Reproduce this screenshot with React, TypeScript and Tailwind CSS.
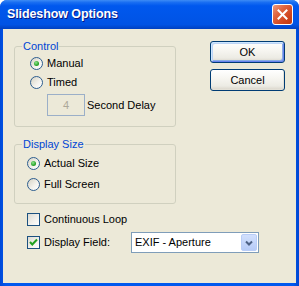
import React from "react";

function Radio({ checked, label }: { checked?: boolean; label: string }) {
  return (
    <div className="flex items-center h-[13px]">
      <span className="w-[13px] h-[13px] shrink-0 rounded-full border border-[#2C5D8F] bg-[linear-gradient(135deg,#D6D3C4_0%,#F4F3EE_60%,#FFFFFF_100%)] flex items-center justify-center">
        {checked && (
          <span className="w-[5px] h-[5px] rounded-full bg-[radial-gradient(circle_at_40%_35%,#8EE58E_0%,#2AA42A_60%,#1A8A1A_100%)]" />
        )}
      </span>
      <span className="ml-[4px] leading-[13px]">{label}</span>
    </div>
  );
}

function Check({ checked }: { checked?: boolean }) {
  return (
    <span className="w-[13px] h-[13px] shrink-0 border border-[#1C5180] bg-[linear-gradient(135deg,#DCDAD2_0%,#F2F1EC_55%,#FFFFFF_100%)] flex items-center justify-center">
      {checked && (
        <svg width="9" height="9" viewBox="0 0 9 9">
          <path d="M1 4 L3.3 6.5 L8 1.5" fill="none" stroke="#21A121" strokeWidth="2" />
        </svg>
      )}
    </span>
  );
}

function XPButton({ label, def }: { label: string; def?: boolean }) {
  return (
    <div
      className={
        "w-[75px] h-[22px] rounded-[3px] border border-[#003C74] bg-[linear-gradient(to_bottom,#FFFFFF_0%,#F6F5F0_45%,#ECEBE4_80%,#D8D3C8_100%)] flex items-center justify-center leading-[13px] " +
        (def
          ? "shadow-[inset_1px_1px_0_#CEE7FF,inset_-1px_-1px_0_#6982EE,inset_2px_2px_0_#BCD4F6,inset_-2px_-2px_0_#89ADE4]"
          : "shadow-[inset_-1px_-1px_0_#E3E0D6]")
      }
    >
      {label}
    </div>
  );
}

export default function App() {
  return (
    <div
      className="w-[299px] h-[286px] bg-white text-[11px] text-black"
      style={{ fontFamily: '"Liberation Sans", Arial, sans-serif' }}
    >
      <div className="w-full h-full flex flex-col rounded-t-[7px] bg-[linear-gradient(to_right,#0049D8_0%,#0058EE_2%,#0058EE_98%,#0046D0_100%)] overflow-hidden">
        <div className="h-[29px] shrink-0 flex items-center justify-between bg-[linear-gradient(to_bottom,#3D8CF5_0%,#1A6FF2_8%,#0058EE_20%,#0055E8_60%,#0053E4_85%,#0040C0_100%)]">
          <span
            className="ml-[7px] text-white font-bold text-[12.5px] tracking-[-0.1px] [text-shadow:1px_1px_0_#0A1883]"
            style={{ fontFamily: '"Liberation Sans", Arial, sans-serif' }}
          >
            Slideshow Options
          </span>
          <div className="mr-[6px] w-[21px] h-[21px] rounded-[3px] border border-white bg-[linear-gradient(135deg,#EE9A7E_0%,#E0643F_35%,#D0451F_70%,#C0380F_100%)] flex items-center justify-center">
            <svg width="11" height="11" viewBox="0 0 11 11">
              <path d="M1.5 1.5 L9.5 9.5 M9.5 1.5 L1.5 9.5" stroke="white" strokeWidth="2" strokeLinecap="square" />
            </svg>
          </div>
        </div>
        <div className="flex-1 mx-[3px] mb-[3px] bg-[#ECE9D8] flex flex-col pt-[11px]">
          <div className="flex">
            <div className="w-[173px] pl-[11px] flex flex-col gap-[11px]">
              <fieldset className="m-0 p-0 min-w-0 border border-[#D0D0BF] rounded-[3px]">
                <legend className="ml-[7px] px-[1px] leading-[13px] text-[#0046D5]">Control</legend>
                <div className="pt-[4px] pl-[15px] pb-[10px] flex flex-col">
                  <Radio checked label="Manual" />
                  <div className="mt-[6px]">
                    <Radio label="Timed" />
                  </div>
                  <div className="mt-[5px] ml-[17px] flex items-center">
                    <div className="w-[38px] h-[22px] border border-[#9BAFC8] flex items-center justify-center text-[#ACA899]">
                      4
                    </div>
                    <span className="ml-[2px]">Second Delay</span>
                  </div>
                </div>
              </fieldset>
              <fieldset className="m-0 p-0 min-w-0 border border-[#D0D0BF] rounded-[3px]">
                <legend className="ml-[7px] px-[1px] leading-[13px] text-[#0046D5]">Display Size</legend>
                <div className="pt-[6px] pl-[12px] pb-[12px] flex flex-col gap-[8px]">
                  <Radio checked label="Actual Size" />
                  <Radio label="Full Screen" />
                </div>
              </fieldset>
            </div>
            <div className="pl-[34px] pt-[1px] flex flex-col gap-[6px]">
              <XPButton label="OK" def />
              <XPButton label="Cancel" />
            </div>
          </div>
          <div className="mt-[9px] pl-[24px] flex flex-col gap-[6px]">
            <div className="flex items-center h-[13px]">
              <Check />
              <span className="ml-[4px]">Continuous Loop</span>
            </div>
            <div className="flex items-center h-[21px]">
              <div className="w-[104px] flex items-center">
                <Check checked />
                <span className="ml-[4px]">Display Field:</span>
              </div>
              <div className="w-[128px] h-[21px] border border-[#7F9DB9] bg-white flex items-center justify-between">
                <span className="ml-[3px]">EXIF - Aperture</span>
                <div className="mr-[1px] w-[16px] h-[17px] rounded-[2px] border border-[#B9CDF7] bg-[linear-gradient(to_bottom,#D2E0FD_0%,#B6CBF7_100%)] flex items-center justify-center">
                  <svg width="8" height="6" viewBox="0 0 8 6">
                    <path d="M1 1.5 L4 4.5 L7 1.5" fill="none" stroke="#4D6185" strokeWidth="2" />
                  </svg>
                </div>
              </div>
            </div>
          </div>
        </div>
      </div>
    </div>
  );
}
